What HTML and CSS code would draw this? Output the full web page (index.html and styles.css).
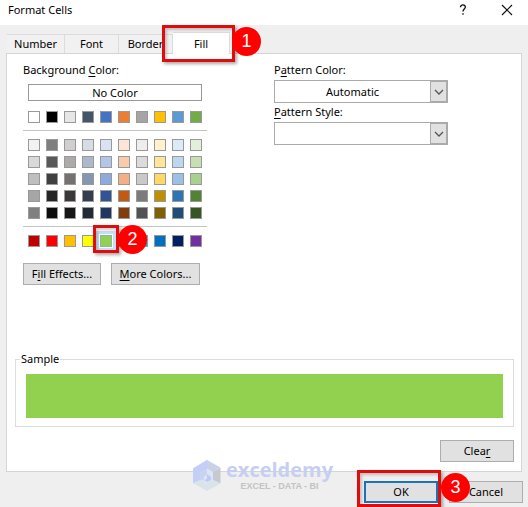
FILE: index.html
```html
<!DOCTYPE html>
<html lang="en">
<head>
<meta charset="utf-8">
<title>Format Cells</title>
<link rel="stylesheet" href="styles.css">
</head>
<body>
<main class="dialog">
  <header class="titlebar">
    <h1 class="title">Format Cells</h1>
    <button class="title-btn" type="button" aria-label="Help"><svg width="10" height="14" viewBox="0 0 10 14"><path d="M2.500 4.200C2.500 1 7.600 1.200 7.300 4.200C7.100 6 5 6.200 5 8.600M5 10.200V11.700" fill="none" stroke="#111" stroke-width="1.400"/></svg></button>
    <button class="title-btn" type="button" aria-label="Close"><svg width="12" height="12" viewBox="0 0 12 12"><path d="M1 1L11 11M11 1L1 11" fill="none" stroke="#111" stroke-width="1.200"/></svg></button>
  </header>

  <nav class="tabs" role="tablist">
    <button class="tab" type="button" role="tab">Number</button>
    <button class="tab" type="button" role="tab">Font</button>
    <button class="tab" type="button" role="tab">Border</button>
    <button class="tab tab-active" type="button" role="tab" aria-selected="true">Fill</button>
    <span class="mark mark-tab"></span>
    <span class="step step-tab">1</span>
  </nav>

  <section class="panel">
    <div class="columns">
      <div class="background">
        <p class="label">Background <u>C</u>olor:</p>
        <button class="no-color" type="button">No Color</button>
        <div class="swatches" id="theme"></div>
        <hr class="rule">
        <div class="swatches" id="shades"></div>
        <hr class="rule">
        <div class="swatches standard" id="standard">
          <span class="mark mark-swatch"></span>
          <span class="step step-swatch">2</span>
        </div>
        <div class="actions">
          <button class="btn btn-effects" type="button">F<u>i</u>ll Effects...</button>
          <button class="btn btn-more" type="button"><u>M</u>ore Colors...</button>
        </div>
      </div>
      <div class="pattern">
        <label class="label" for="color">P<u>a</u>ttern Color:</label>
        <div class="combo">
          <select id="color"><option>Automatic</option></select>
          <span class="arrow"><svg width="10" height="6" viewBox="0 0 10 6"><path d="M1 1L5 5L9 1" fill="none" stroke="#555" stroke-width="1.300"/></svg></span>
        </div>
        <label class="label" for="style"><u>P</u>attern Style:</label>
        <div class="combo">
          <select id="style"><option></option></select>
          <span class="arrow"><svg width="10" height="6" viewBox="0 0 10 6"><path d="M1 1L5 5L9 1" fill="none" stroke="#555" stroke-width="1.300"/></svg></span>
        </div>
      </div>
    </div>

    <fieldset class="sample">
      <legend>Sample</legend>
      <div class="sample-fill"></div>
    </fieldset>
    <button class="btn btn-clear" type="button">Clea<u>r</u></button>
  </section>

  <footer class="footer">
    <div class="ok-wrap">
      <button class="btn btn-ok" type="button">OK</button>
      <span class="mark mark-ok"></span>
      <span class="step step-ok">3</span>
    </div>
    <button class="btn btn-cancel" type="button">Cancel</button>
  </footer>

  <div class="watermark">
    <svg width="28" height="32" viewBox="0 0 28 32">
      <path d="M14 0L27.500 7.500L20 12L14 9L7 12.500L0 8.500Z" fill="#c9d1e8"/>
      <path d="M0 8.500L14 0V9L7 12.500V20L13 23.500L0 23Z" fill="#c3cff7"/>
      <path d="M27.500 7.500V23.500L20 20V12Z" fill="#c6c9d2"/>
      <path d="M0 23L7 20L14 23.500L20 20L27.500 23.500L14 31Z" fill="#d9e4e8"/>
      <path d="M7 12.500L14 9V15L11 17V21L7 20Z" fill="#c9d2f3"/>
      <path d="M14 9L20 12V20L14 23.500L10 21L11 17L14 15Z" fill="#dde4f4"/>
      <path d="M14 14L18 17V20L14 22L11 20L14 19Z" fill="#bccaf7"/>
    </svg>
    <div class="brand">
      <div class="brand-name">exceldemy</div>
      <div class="brand-tag">EXCEL - DATA - BI</div>
    </div>
  </div>
</main>
<script src="palette.js"></script>
</body>
</html>
```
FILE: palette.js
```js
const palettes = {
  theme: ["ffffff 000000 e7e6e6 44546a 4472c4 ed7d31 a5a5a5 ffc000 5b9bd5 70ad47"],
  shades: [
    "f2f2f2 7f7f7f d0cece d6dce4 d9e1f2 fce4d6 ededed fff2cc ddebf7 e2efda",
    "d9d9d9 595959 aeaaaa acb9ca b4c6e7 f8cbad dbdbdb ffe699 bdd7ee c6e0b4",
    "bfbfbf 404040 757171 8497b0 8ea9db f4b084 c9c9c9 ffd966 9bc2e6 a9d08e",
    "a6a6a6 262626 3a3838 333f4f 305496 c65911 7b7b7b bf8f00 2f75b5 548235",
    "808080 0d0d0d 161616 222b35 203764 833c0c 525252 806000 1f4e78 375623"
  ],
  standard: ["c00000 ff0000 ffc000 ffff00 92d050 00b050 00b0f0 0070c0 002060 7030a0"]
};

for (const [id, rows] of Object.entries(palettes)) {
  const group = document.getElementById(id);
  const items = rows.join(" ").split(" ").map((hex) => {
    const swatch = document.createElement("input");
    swatch.type = "radio";
    swatch.name = "fill";
    swatch.className = "swatch";
    swatch.setAttribute("aria-label", "#" + hex);
    swatch.style.backgroundColor = "#" + hex;
    swatch.checked = hex === "92d050";
    return swatch;
  });
  group.prepend(...items);
}
```
FILE: styles.css
```css
* {
  box-sizing: border-box;
}

body {
  margin: 0;
  background: #efefef;
  color: #000;
  font: 11px/16px "Noto Sans", "Open Sans", sans-serif;
}

button,
select {
  margin: 0;
  padding: 0;
  color: inherit;
  font: inherit;
}

u {
  text-underline-offset: 2px;
}

.dialog {
  position: relative;
  display: flex;
  flex-direction: column;
  min-height: 100vh;
}

.titlebar {
  display: flex;
  align-items: center;
  gap: 24px;
  height: 25px;
  padding: 0 11px 6px 8px;
  background: #fff;
}

.title {
  flex: 1;
  margin: 0;
  font-size: 11px;
  font-weight: 400;
}

.title-btn {
  display: flex;
  align-items: center;
  justify-content: center;
  width: 20px;
  border: 0;
  background: none;
}

.tabs {
  position: relative;
  z-index: 1;
  display: flex;
  align-items: flex-end;
  height: 29px;
  margin: 0 6px -1px;
  padding-left: 1px;
}

.tab {
  width: 54px;
  height: 19px;
  margin-bottom: 1px;
  border: 1px solid #dcdcdc;
  border-width: 1px 1px 0 0;
  background: #f1f1f1;
}

.tab:first-child {
  width: 58px;
}

.tab-active {
  width: 57px;
  height: 22px;
  margin-bottom: 0;
  background: #fff;
}

.panel {
  display: flex;
  flex: 1;
  flex-direction: column;
  margin: 0 6px;
  padding: 8px 7px 9px 8px;
  border: 1px solid #d5d5d5;
  background: #fff;
}

.columns {
  display: flex;
  gap: 67px;
  padding-left: 8px;
}

.background {
  width: 184px;
}

.pattern {
  width: 174px;
}

.label {
  display: block;
  margin: 0;
}

.no-color {
  display: block;
  width: 174px;
  height: 17px;
  margin: 6px 5px 10px;
  border: 1px solid #999;
  background: #fff;
  line-height: 14px;
}

.swatches {
  position: relative;
  display: grid;
  grid-template-columns: repeat(10, 12px);
  gap: 5px 6px;
  padding: 0 5px;
}

.swatch {
  width: 12px;
  height: 12px;
  margin: 0;
  border: 1px solid #999;
  appearance: none;
}

.swatch:checked {
  border-color: #8fb3b0;
  outline: 3px solid #c5dff2;
  outline-offset: 1px;
}

.rule {
  height: 1px;
  margin: 7px 0 8px;
  border: 0;
  background: #c4c4c4;
}

.actions {
  display: flex;
  gap: 10px;
  margin-top: 16px;
}

.btn {
  flex: none;
  width: 74px;
  height: 22px;
  border: 1px solid #adadad;
  background: #e1e1e1;
}

.btn-effects {
  width: 78px;
}

.btn-more {
  width: 89px;
}

.combo {
  display: flex;
  height: 23px;
  margin: 2px 0 1px;
  border: 1px solid #aaa;
}

.combo select {
  flex: 1;
  border: 0;
  background: #fff;
  appearance: none;
  text-align-last: center;
}

.arrow {
  display: flex;
  align-items: center;
  justify-content: center;
  width: 17px;
  border: 1px solid #aaa;
  background: #e1e1e1;
}

.sample {
  margin: auto 0 13px;
  padding: 7px 10px 8px;
  border: 1px solid #dcdcdc;
}

.sample legend {
  margin-left: -6px;
  padding: 0 1px;
}

.sample-fill {
  height: 44px;
  background: #92d050;
}

.btn-clear {
  align-self: flex-end;
}

.footer {
  display: flex;
  justify-content: flex-end;
  gap: 11px;
  padding: 9px 5px 4px;
}

.ok-wrap {
  position: relative;
}

.btn-ok {
  display: block;
  border: 2px solid #1c73b8;
}

.mark {
  position: absolute;
  border: 3px solid #e00b0b;
  box-shadow: 2px 2px 3px #0005, inset 2px 2px 3px #0003;
  pointer-events: none;
}

.mark-tab {
  top: 0;
  left: 156px;
  width: 73px;
  height: 37px;
}

.mark-swatch {
  top: -10px;
  left: 70px;
  width: 26px;
  height: 28px;
}

.mark-ok {
  top: -11px;
  left: -7px;
  width: 84px;
  height: 37px;
}

.step {
  position: absolute;
  width: 29px;
  height: 29px;
  border-radius: 50%;
  background: #f00;
  color: #fff;
  font: 18px/29px "Liberation Sans", Arial, sans-serif;
  text-align: center;
}

.step-tab {
  top: 2px;
  left: 226px;
}

.step-swatch {
  top: -10px;
  left: 95px;
}

.step-ok {
  top: -8px;
  left: 77px;
}

.watermark {
  position: absolute;
  bottom: 15px;
  left: 193px;
  display: flex;
  gap: 5px;
  pointer-events: none;
}

.brand-name {
  color: #c6cff2;
  font: 700 20px/20px "Open Sans", sans-serif;
}

.brand-tag {
  margin-top: 1px;
  color: #c3c3c3;
  font: 700 9px/10px "Liberation Sans", sans-serif;
  text-align: center;
}
```
